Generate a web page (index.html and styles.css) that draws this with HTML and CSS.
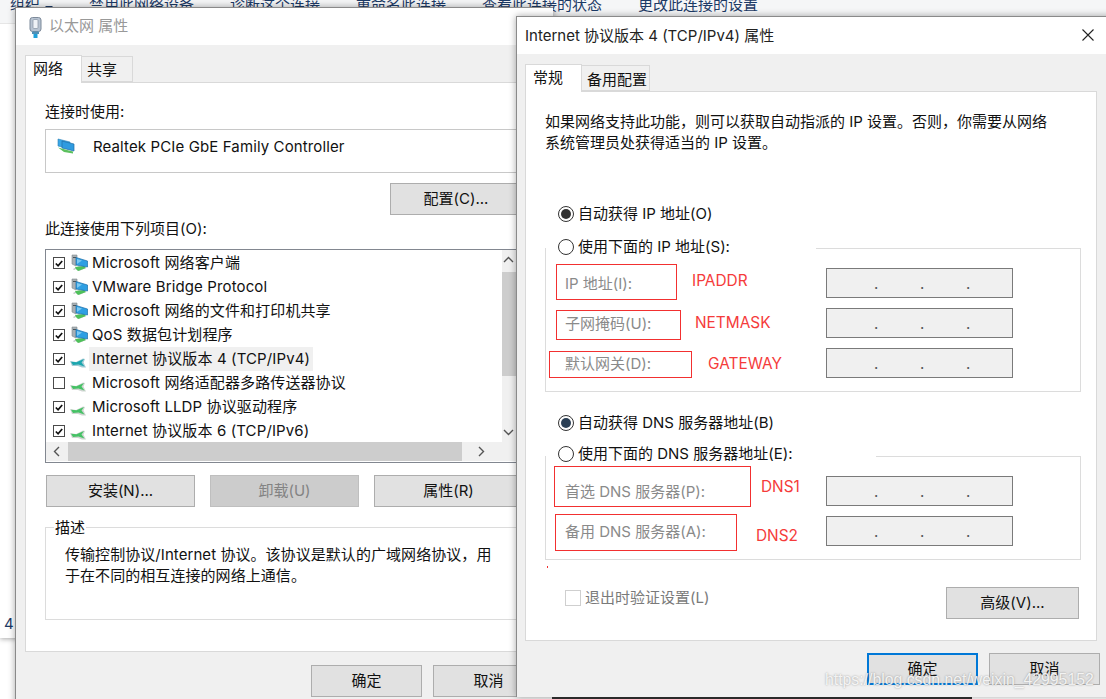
FILE: index.html
```html
<!DOCTYPE html>
<html lang="zh-CN">
<head>
<meta charset="utf-8">
<title>Internet 协议版本 4 (TCP/IPv4) 属性</title>
<link rel="stylesheet" href="styles.css">
</head>
<body>
<svg class="defs" width="0" height="0" aria-hidden="true">
  <symbol id="svc" viewBox="0 0 18 18">
    <path d="M16 14 L9 17 L6 15 L4 16 L3 15 L9 12 L13 13 Z" fill="#bfc5c6"/>
    <path d="M5 13 L14 12 L16 14 L8 17 L6 15 Z" fill="#4fc15a"/>
    <path d="M2 1 H7 V5 L6 12 L2 10 Z" fill="#a9b0b4" stroke="#7f8a8f" stroke-width=".6"/>
    <rect x="3" y="3" width="3" height="1" fill="#49545a"/>
    <path d="M6 3.5 L17.5 7 V13 L6 11 Z" fill="#2e9fe3" stroke="#1c6ea8" stroke-width=".7"/>
    <path d="M7 5 L12 6.4 L7 10 Z" fill="#7cc9f2"/>
  </symbol>
  <symbol id="proto" viewBox="0 0 16 10">
    <path d="M0 3 L6 4 L13 0.500 L15 1 L13.500 4.500 L16 9.500 L12 9.500 L8 8 L2 8 Z" fill="#cfd5d1"/>
    <path d="M1 3.800 L6.500 4.300 L14 1 L11.500 4.600 L14.500 8.400 L8.500 6.600 L3 7 Z" fill="#45c265"/>
  </symbol>
  <symbol id="proto-on" viewBox="0 0 16 10">
    <path d="M0 3 L6 4 L13 0.500 L15 1 L13.500 4.500 L16 9.500 L12 9.500 L8 8 L2 8 Z" fill="#a5cbd4"/>
    <path d="M1 3.800 L6.500 4.300 L14 1 L11.500 4.600 L14.500 8.400 L8.500 6.600 L3 7 Z" fill="#1ba6ae"/>
  </symbol>
  <symbol id="tick" viewBox="0 0 11 11">
    <path d="M2 5.500 L4.500 8 L9 2.800" fill="none" stroke="#111" stroke-width="1.900"/>
  </symbol>
</svg>

<div class="desktop">
  <div class="bgwin">
    <div class="toolbar">
      <span class="tool-org">组织<i class="caret"></i></span>
      <span>禁用此网络设备</span>
      <span>诊断这个连接</span>
      <span>重命名此连接</span>
      <span>查看此连接的状态</span>
      <span>更改此连接的设置</span>
    </div>
    <div class="bgstatus">4</div>
  </div>

  <section class="win win-eth">
    <header class="titlebar title-muted">
      <svg class="plug" width="13" height="21" viewBox="0 0 13 21" aria-hidden="true">
        <rect x="1" y="0.5" width="11" height="14" rx="2.5" fill="#b7c3d2" stroke="#7d8a9a"/>
        <rect x="4" y="2.5" width="5" height="9" rx="1" fill="#eef2f7" stroke="#8793a3" stroke-width=".7"/>
        <rect x="3" y="14.5" width="7" height="2.5" fill="#4f8fb5"/>
        <rect x="4.5" y="17" width="4" height="4" fill="#1e9fd8"/>
      </svg>
      <span class="title-text">以太网 属性</span>
    </header>
    <div class="winbody">
      <div class="tabs">
        <div class="tab tab-on tab-net">网络</div>
        <div class="tab tab-share">共享</div>
      </div>
      <div class="panel panel-eth">
        <div class="line">连接时使用:</div>
        <div class="adapter">
          <svg class="adapter-ico" width="18" height="16" viewBox="0 0 18 16" aria-hidden="true">
            <path d="M1 1 L13 4 V11 L1 8 Z" fill="#3aa6e6" stroke="#2a7fb5" stroke-width=".6"/>
            <path d="M5 3 L17 6 V13 L5 10 Z" fill="#2f9be0" stroke="#1f6fa6" stroke-width=".7"/>
            <path d="M1 9.5 L10 12 L16 13.5 V15.5 L7 14 Z" fill="#5cc05e"/>
          </svg>
          <span>Realtek PCIe GbE Family Controller</span>
        </div>
        <div class="cfg-row"><button class="btn btn-cfg">配置(C)...</button></div>
        <div class="line line-items">此连接使用下列项目(O):</div>

        <div class="listbox">
          <ul class="rows">
            <li class="row"><span class="chk"><svg width="11" height="11"><use href="#tick"/></svg></span><svg class="ico" width="18" height="18"><use href="#svc"/></svg><span class="rowtext">Microsoft 网络客户端</span></li>
            <li class="row"><span class="chk"><svg width="11" height="11"><use href="#tick"/></svg></span><svg class="ico" width="18" height="18"><use href="#svc"/></svg><span class="rowtext">VMware Bridge Protocol</span></li>
            <li class="row"><span class="chk"><svg width="11" height="11"><use href="#tick"/></svg></span><svg class="ico" width="18" height="18"><use href="#svc"/></svg><span class="rowtext">Microsoft 网络的文件和打印机共享</span></li>
            <li class="row"><span class="chk"><svg width="11" height="11"><use href="#tick"/></svg></span><svg class="ico" width="18" height="18"><use href="#svc"/></svg><span class="rowtext">QoS 数据包计划程序</span></li>
            <li class="row"><span class="chk"><svg width="11" height="11"><use href="#tick"/></svg></span><svg class="ico ico-proto" width="16" height="10"><use href="#proto-on"/></svg><span class="rowtext rowtext-on">Internet 协议版本 4 (TCP/IPv4)</span></li>
            <li class="row"><span class="chk"></span><svg class="ico ico-proto" width="16" height="10"><use href="#proto"/></svg><span class="rowtext">Microsoft 网络适配器多路传送器协议</span></li>
            <li class="row"><span class="chk"><svg width="11" height="11"><use href="#tick"/></svg></span><svg class="ico ico-proto" width="16" height="10"><use href="#proto"/></svg><span class="rowtext">Microsoft LLDP 协议驱动程序</span></li>
            <li class="row"><span class="chk"><svg width="11" height="11"><use href="#tick"/></svg></span><svg class="ico ico-proto" width="16" height="10"><use href="#proto"/></svg><span class="rowtext">Internet 协议版本 6 (TCP/IPv6)</span></li>
          </ul>
          <div class="vscroll">
            <svg class="arrow" width="13" height="19" viewBox="0 0 13 19"><path d="M2 12 L6.500 7.500 L11 12" fill="none" stroke="#555" stroke-width="1.400"/></svg>
            <div class="vthumb"></div>
            <svg class="arrow arrow-down" width="13" height="19" viewBox="0 0 13 19"><path d="M2 7 L6.500 11.500 L11 7" fill="none" stroke="#555" stroke-width="1.400"/></svg>
          </div>
          <div class="hscroll">
            <svg class="arrow" width="22" height="19" viewBox="0 0 22 19"><path d="M13 5 L8.500 9.500 L13 14" fill="none" stroke="#555" stroke-width="1.400"/></svg>
            <div class="hthumb"></div>
            <svg class="arrow" width="22" height="19" viewBox="0 0 22 19"><path d="M10 5 L14.500 9.500 L10 14" fill="none" stroke="#555" stroke-width="1.400"/></svg>
          </div>
        </div>

        <div class="btnrow">
          <button class="btn btn-list">安装(N)...</button>
          <button class="btn btn-list btn-off">卸载(U)</button>
          <button class="btn btn-list">属性(R)</button>
        </div>

        <div class="descbox">
          <div class="desc-legend">描述</div>
          <p class="desc-text">传输控制协议/Internet 协议。该协议是默认的广域网络协议，用<br>于在不同的相互连接的网络上通信。</p>
        </div>
      </div>
      <div class="foot foot-eth">
        <button class="btn btn-foot">确定</button>
        <button class="btn btn-foot">取消</button>
      </div>
    </div>
  </section>

  <section class="win win-ip">
    <header class="titlebar title-ip">
      <span>Internet 协议版本 4 (TCP/IPv4) 属性</span>
      <svg class="close" width="12" height="12" viewBox="0 0 12 12" aria-hidden="true"><path d="M0.500 0.500 L11.500 11.500 M11.500 0.500 L0.500 11.500" stroke="#222" stroke-width="1.100"/></svg>
    </header>
    <div class="winbody">
      <div class="tabs">
        <div class="tab tab-on tab-gen">常规</div>
        <div class="tab tab-alt">备用配置</div>
      </div>
      <div class="panel panel-ip">
        <p class="intro">如果网络支持此功能，则可以获取自动指派的 IP 设置。否则，你需要从网络<br>系统管理员处获得适当的 IP 设置。</p>

        <label class="choice choice-ip"><span class="radio radio-on"></span>自动获得 IP 地址(O)</label>
        <div class="group group-ip">
          <label class="legend legend-ip"><span class="radio"></span>使用下面的 IP 地址(S):</label>
          <div class="fields">
            <span class="flabel">IP 地址(I):</span>
            <div class="field"><i>.</i><i>.</i><i>.</i></div>
            <span class="flabel">子网掩码(U):</span>
            <div class="field"><i>.</i><i>.</i><i>.</i></div>
            <span class="flabel">默认网关(D):</span>
            <div class="field"><i>.</i><i>.</i><i>.</i></div>
          </div>
          <div class="mark mark-1"></div><div class="note note-1">IPADDR</div>
          <div class="mark mark-2"></div><div class="note note-2">NETMASK</div>
          <div class="mark mark-3"></div><div class="note note-3">GATEWAY</div>
        </div>

        <label class="choice choice-dns"><span class="radio radio-on radio-blue"></span>自动获得 DNS 服务器地址(B)</label>
        <div class="group group-dns">
          <label class="legend legend-dns"><span class="radio"></span>使用下面的 DNS 服务器地址(E):</label>
          <div class="fields">
            <span class="flabel">首选 DNS 服务器(P):</span>
            <div class="field"><i>.</i><i>.</i><i>.</i></div>
            <span class="flabel">备用 DNS 服务器(A):</span>
            <div class="field"><i>.</i><i>.</i><i>.</i></div>
          </div>
          <div class="mark mark-4"></div><div class="note note-4">DNS1</div>
          <div class="mark mark-5"></div><div class="note note-5">DNS2</div>
          <div class="speck"></div>
        </div>

        <div class="bottomrow">
          <label class="verify"><span class="chk chk-off"></span>退出时验证设置(L)</label>
          <button class="btn btn-adv">高级(V)...</button>
        </div>
      </div>
      <div class="foot foot-ip">
        <button class="btn btn-foot btn-default">确定</button>
        <button class="btn btn-foot">取消</button>
      </div>
    </div>
  </section>
  <div class="watermark">https://blog.csdn.net/weixin_42995152</div>
  <div class="taskbar"></div>
</div>
</body>
</html>
```
FILE: styles.css
```css
* { box-sizing: border-box; }
html, body { margin: 0; padding: 0; }
body {
  width: 1106px;
  height: 699px;
  overflow: hidden;
  background: #fff;
  font-family: "Inter", "Noto Sans CJK SC", sans-serif;
  font-size: 15px;
  line-height: 20px;
  color: #111;
}
.defs { position: absolute; }
.desktop { position: relative; width: 1106px; height: 699px; overflow: hidden; background: #fff; }
p { margin: 0; }
ul { list-style: none; margin: 0; padding: 0; }

/* window behind */
.bgwin {
  height: 638px;
  background: #fff;
  box-shadow: 0 1px 5px rgba(0,0,0,.35);
  display: flex;
  flex-direction: column;
  justify-content: space-between;
}
.toolbar {
  height: 24px;
  background: #f5f6f7;
  border-bottom: 1px solid #e6e6e6;
  padding-left: 10px;
  display: flex;
  gap: 36px;
  line-height: 20px;
  white-space: nowrap;
  color: #1c3a66;
  overflow: hidden;
}
.toolbar span { margin-top: -5px; height: 20px; }
.tool-org { width: 43px; display: flex; align-items: center; }
.caret {
  margin-left: 5px;
  margin-top: 6px;
  border-left: 4px solid transparent;
  border-right: 4px solid transparent;
  border-top: 4px solid #1c3a66;
}
.bgstatus { padding: 0 0 4px 4px; line-height: 20px; color: #1c3a66; }

/* windows */
.win {
  position: absolute;
  background: #fff;
  box-shadow: 0 0 7px rgba(0,0,0,.35);
  border-top: 1px solid #8a8a8a;
  border-left: 1px solid #8a8a8a;
  display: flex;
  flex-direction: column;
}
.win-eth { left: 15px; top: 7px; width: 538px; height: 720px; }
.win-ip { left: 516px; top: 16px; width: 600px; height: 681px; }
.titlebar { height: 37px; flex: none; display: flex; align-items: center; white-space: nowrap; }
.title-muted { color: #999; padding-left: 13px; gap: 7px; }
.title-text { margin-top: -2px; }
.plug { margin-top: 2px; }
.title-ip { padding-left: 8px; color: #222; }
.close { position: absolute; left: 565px; top: 12px; }
.winbody { flex: 1; background: #f0f0f0; padding-top: 10px; }
.win-ip .winbody { padding-top: 11px; }

/* tabs */
.tabs { display: flex; align-items: flex-end; height: 27px; position: relative; z-index: 1; margin-left: 9px; }
.win-ip .tabs { margin-left: 8px; height: 26px; }
.tab {
  background: #f0f0f0;
  border: 1px solid #d9d9d9;
  border-left: 0;
  border-bottom: 1px solid #d9d9d9;
  height: 26px;
  line-height: 26px;
  padding-left: 5px;
  white-space: nowrap;
}
.tab-on {
  background: #fff;
  border-left: 1px solid #d9d9d9;
  border-bottom: 0;
  height: 28px;
  margin-bottom: -1px;
  line-height: 25px;
  padding-left: 7px;
}
.win-ip .tab { line-height: 27px; }
.win-ip .tab-on { line-height: 26px; }
.tab-net { width: 57px; }
.tab-share { width: 51px; }
.tab-gen { width: 57px; }
.tab-alt { width: 68px; }

.panel { background: #fff; border: 1px solid #d9d9d9; }
.panel-eth { margin-left: 9px; width: 560px; height: 570px; padding: 19px 0 0 19px; }
.panel-ip { margin-left: 8px; width: 572px; height: 550px; padding-top: 19px; }

.line { line-height: 20px; white-space: nowrap; }
.adapter {
  margin-top: 7px;
  height: 44px;
  width: 500px;
  border: 1px solid #c8c8c8;
  padding: 7px 0 0 11px;
  display: flex;
  align-items: flex-start;
  line-height: 20px;
  white-space: nowrap;
  letter-spacing: .12px;
}
.adapter-ico { margin-right: 18px; margin-top: 1px; }
.cfg-row { margin: 10px 0 0 345px; }
.line-items { margin-top: 4px; }

/* buttons */
.btn {
  display: block;
  height: 32px;
  background: #e1e1e1;
  border: 1px solid #adadad;
  font: inherit;
  color: #111;
  padding: 0;
  white-space: nowrap;
}
.btn-cfg { width: 132px; }
.btn-list { width: 149px; }
.btn-off { background: #cccccc; border-color: #bfbfbf; color: #838383; }
.btn-foot { width: 111px; }
.btn-default { border: 2px solid #0078d7; }
.btn-adv { width: 133px; margin-left: auto; }

/* list */
.listbox {
  margin-top: 10px;
  width: 475px;
  height: 214px;
  border: 1px solid #828790;
  display: grid;
  grid-template-columns: 456px 17px;
  grid-template-rows: 192px 20px;
}
.rows { padding-top: 1px; overflow: hidden; }
.row { height: 24px; display: flex; align-items: center; padding-left: 7px; white-space: nowrap; }
.chk {
  flex: none;
  width: 12px;
  height: 12px;
  border: 1px solid #4a4a4a;
  background: #fff;
  display: flex;
  align-items: center;
  justify-content: center;
  margin-right: 5px;
}
.chk-off { width: 16px; height: 16px; border-color: #cfcfcf; margin: 0; }
.ico { flex: none; }
.ico-proto { margin: 8px 2px 0 0; }
.rowtext { padding: 0 3px; height: 24px; line-height: 24px; margin-left: 1px; letter-spacing: .12px; }
.rowtext-on { background: #f0f0f0; }
.vscroll { background: #f0f0f0; display: flex; flex-direction: column; }
.vthumb { height: 104px; background: #cdcdcd; margin-top: 3px; }
.arrow { flex: none; }
.arrow-down { margin-top: auto; }
.hscroll { grid-column: 1 / -1; background: #f0f0f0; display: flex; height: 19px; }
.hthumb { width: 394px; background: #cdcdcd; margin-right: 7px; }

.btnrow { margin-top: 12px; display: flex; gap: 15px; margin-left: 1px; }
.descbox { margin-top: 20px; width: 500px; height: 93px; border: 1px solid #dcdcdc; }
.desc-legend { margin: -10px 0 0 8px; width: fit-content; background: #fff; padding: 0 1px; line-height: 20px; }
.desc-text { margin-top: 6px; padding-left: 19px; line-height: 21px; white-space: nowrap; letter-spacing: .06px; }

.foot { display: flex; gap: 11px; }
.foot-eth { margin: 13px 0 0 295px; }
.foot-ip { margin: 12px 0 0 350px; }

/* ip panel */
.intro { margin-left: 19px; line-height: 21px; white-space: nowrap; }
.choice { display: flex; align-items: center; height: 20px; margin-left: 32px; white-space: nowrap; }
.choice-ip { margin-top: 51px; }
.choice-dns { margin-top: 21px; }
.radio {
  flex: none;
  position: relative;
  width: 16px;
  height: 16px;
  border: 1px solid #333;
  border-radius: 50%;
  background: #fff;
  margin-right: 4px;
}
.radio-on::after {
  content: "";
  position: absolute;
  left: 2px;
  top: 2px;
  width: 10px;
  height: 10px;
  border-radius: 50%;
  background: #333;
}
.radio-blue::after { background: #2b3f55; }
.group { position: relative; margin-left: 19px; width: 536px; border: 1px solid #dcdcdc; }
.group-ip { margin-top: 24px; height: 144px; }
.group-dns { margin-top: 23px; height: 104px; }
.legend { display: flex; align-items: center; height: 20px; background: #fff; padding-left: 12px; white-space: nowrap; }
.legend-ip { width: 270px; margin-top: -12px; }
.legend-dns { width: 330px; margin-top: -13px; }
.fields {
  display: grid;
  grid-template-columns: 261px 187px;
  grid-auto-rows: 30px;
  row-gap: 10px;
  align-items: center;
  padding-left: 19px;
  margin-top: 11px;
}
.group-dns .fields { margin-top: 12px; }
.flabel { color: #8a8a8a; white-space: nowrap; position: relative; top: 1px; }
.field {
  height: 30px;
  background: #f0f0f0;
  border: 1px solid #7a7a7a;
  display: flex;
  padding-left: 5px;
  justify-content: center;
  gap: 42px;
}
.field i { font-style: normal; width: 4px; text-align: center; line-height: 29px; color: #555; }

/* red annotations */
.mark { position: absolute; border: 1px solid #f23030; }
.note { position: absolute; color: #f53b3b; font-size: 15.4px; line-height: 20px; white-space: nowrap; }
.mark-1 { left: 10px; top: 15px; width: 121px; height: 36px; }
.mark-2 { left: 10px; top: 61px; width: 125px; height: 30px; }
.mark-3 { left: 3px; top: 102px; width: 143px; height: 27px; }
.mark-4 { left: 8px; top: 9px; width: 197px; height: 41px; }
.mark-5 { left: 9px; top: 57px; width: 182px; height: 37px; }
.note-1 { left: 146px; top: 22px; }
.note-2 { left: 149px; top: 64px; }
.note-3 { left: 162px; top: 105px; }
.note-4 { left: 215px; top: 20px; }
.note-5 { left: 210px; top: 69px; }
.speck { position: absolute; left: 1px; top: 109px; width: 1px; height: 2px; background: #f23030; }

.bottomrow { display: flex; align-items: flex-start; margin-top: 27px; padding: 0 17px 0 39px; }
.verify { display: flex; align-items: center; height: 21px; gap: 4px; color: #7a7a7a; white-space: nowrap; }

.watermark {
  position: absolute;
  left: 825px;
  top: 670px;
  font-family: "Liberation Sans", sans-serif;
  font-size: 15.8px;
  line-height: 20px;
  color: rgba(255,255,255,.85);
  text-shadow: 0 0 2px rgba(90,90,90,.6);
  white-space: nowrap;
}
.taskbar { position: absolute; left: 552px; right: 134px; bottom: 0; height: 2px; background: #2a2a2a; }
```
